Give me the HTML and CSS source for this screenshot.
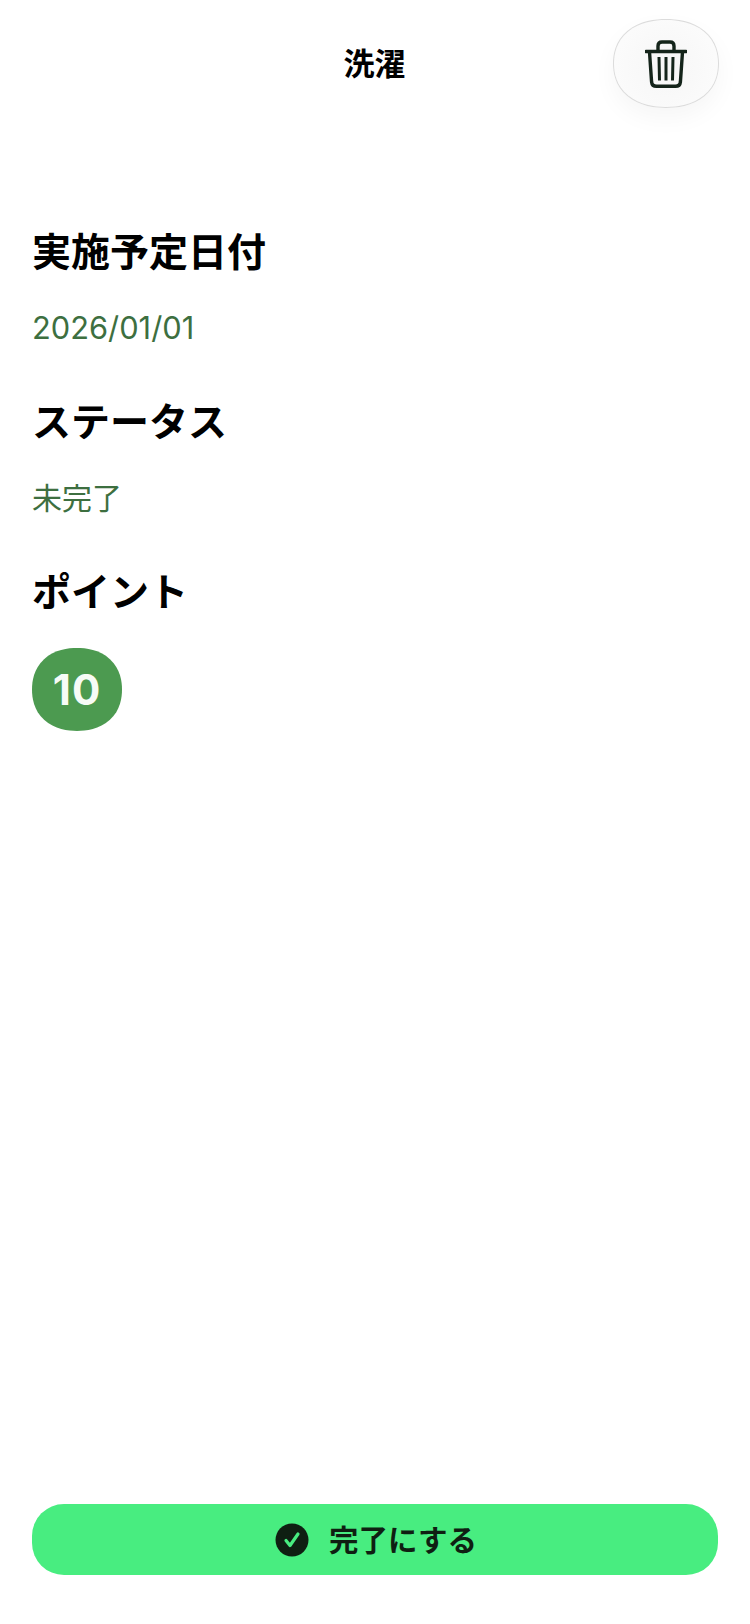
FILE: index.html
```
<!DOCTYPE html>
<html lang="ja">
<head>
	<meta charset="utf-8">
	<title>洗濯</title>
	<link rel="stylesheet" href="styles.css">
</head>
<body>

<header class="topbar">
	<h1 class="topbar-title">洗濯</h1>
	<button class="trash-button" type="button" aria-label="削除">
		<svg class="trash-icon" width="42" height="48" viewBox="0 0 42 48" fill="none" stroke="#14241a" stroke-width="3.4">
			<path d="M1 11.5H41" stroke-linecap="round"/>
			<path d="M13 11V6Q13 2 17 2H25Q29 2 29 6V11"/>
			<path d="M4.5 12L6.6 42Q7 46.3 11.5 46.3H30.5Q35 46.3 35.4 42L37.5 12"/>
			<path d="M14 17L14.5 40.5M21 17V40.5M28 17L27.5 40.5" stroke-width="3"/>
		</svg>
	</button>
</header>

<main class="details">
	<section class="field">
		<h2 class="field-label">実施予定日付</h2>
		<p class="field-value">2026/01/01</p>
	</section>
	<section class="field">
		<h2 class="field-label">ステータス</h2>
		<p class="field-value field-value-status">未完了</p>
	</section>
	<section class="field">
		<h2 class="field-label">ポイント</h2>
		<div class="points-badge">10</div>
	</section>
</main>

<footer class="actions">
	<button class="complete-button" type="button">
		<svg class="check-icon" width="34" height="34" viewBox="0 0 34 34">
			<circle cx="17" cy="17" r="16.5" fill="#0f1f12"/>
			<path d="M11 17.5L15 22.5L23 11" fill="none" stroke="#48ed80" stroke-width="3.2" stroke-linecap="round" stroke-linejoin="round"/>
		</svg>
		<span class="complete-label">完了にする</span>
	</button>
</footer>

</body>
</html>
```

FILE: styles.css
```
* {
	box-sizing: border-box;
}

body {
	margin: 0;
	height: 1624px;
	display: flex;
	flex-direction: column;
	background: #fff;
	color: #000;
	font-family: Inter, "Noto Sans CJK JP", sans-serif;
}

.topbar {
	display: grid;
	grid-template-columns: 1fr auto 1fr;
	align-items: center;
	padding: 19px 31px 0 30px;
}

.topbar-title {
	grid-column: 2;
	margin: 0;
	font-size: 31px;
	font-weight: 700;
	line-height: 40px;
}

.trash-button {
	grid-column: 3;
	justify-self: end;
	display: flex;
	align-items: center;
	justify-content: center;
	width: 106px;
	height: 89px;
	padding: 0;
	border: 1px solid #dcdcdc;
	border-radius: 50%;
	corner-shape: superellipse(1.15);
	background: radial-gradient(circle at 50% 55%, #f6f6f6, #fdfdfd);
	box-shadow: 0 10px 24px rgba(0, 0, 0, .04);
}

.details {
	flex: 1;
	display: flex;
	flex-direction: column;
	gap: 51px;
	padding: 121px 32px 0;
}

.field-label {
	margin: 0 0 33px;
	font-size: 39px;
	font-weight: 700;
	line-height: 46px;
}

.field-value {
	margin: 0;
	font-size: 30.8px;
	line-height: 40px;
	color: #3d6f40;
}

.field-value-status {
	font-size: 30px;
}

.points-badge {
	display: flex;
	align-items: center;
	justify-content: center;
	width: 90px;
	height: 83px;
	margin-top: 2px;
	border-radius: 50%;
	corner-shape: superellipse(1.15);
	background: #4c9a50;
	color: #f6fbf6;
	font-size: 42px;
	font-weight: 700;
	letter-spacing: 1px;
}

.actions {
	padding: 0 32px 49px;
}

.complete-button {
	display: flex;
	align-items: center;
	justify-content: center;
	gap: 20px;
	width: 100%;
	height: 71px;
	padding: 0 0 0 2px;
	border: 0;
	border-radius: 32px;
	background: #48ed80;
	color: #0f1f12;
	font-family: inherit;
	font-size: 29.5px;
	font-weight: 700;
}

.complete-label {
	margin-bottom: 3px;
}
```
